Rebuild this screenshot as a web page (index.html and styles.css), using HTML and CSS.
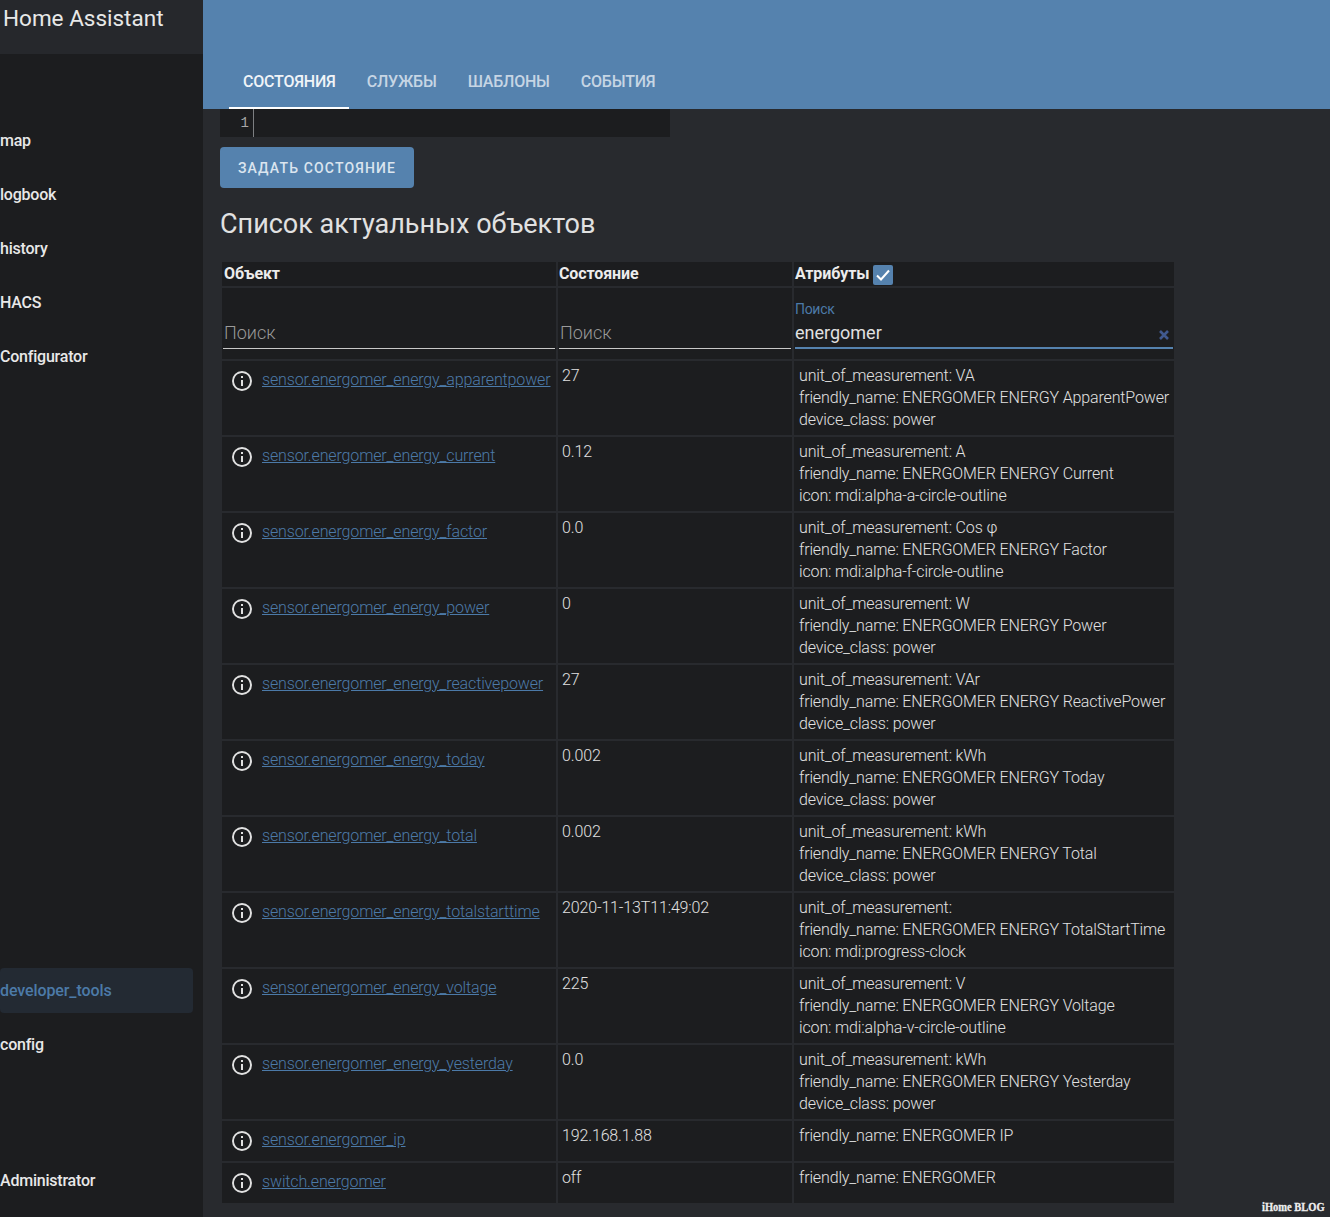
FILE: index.html
```html
<!DOCTYPE html>
<html lang="ru">
<head>
<meta charset="utf-8">
<title>Home Assistant</title>
<link rel="stylesheet" href="styles.css">
</head>
<body>
<svg class="defs" width="0" height="0"><symbol id="info" viewBox="0 0 24 24"><path d="M11,9H13V7H11M12,20C7.59,20 4,16.41 4,12C4,7.59 7.59,4 12,4C16.41,4 20,7.59 20,12C20,16.41 16.41,20 12,20M12,2A10,10 0 0,0 2,12A10,10 0 0,0 12,22A10,10 0 0,0 22,12A10,10 0 0,0 12,2M11,17H13V11H11V17Z"/></symbol></svg>
<aside class="sidebar">
  <div class="brand"><span>Home Assistant</span></div>
  <nav class="nav nav-top">
    <a class="nav-item">map</a>
    <a class="nav-item">logbook</a>
    <a class="nav-item">history</a>
    <a class="nav-item">HACS</a>
    <a class="nav-item">Configurator</a>
  </nav>
  <nav class="nav nav-bottom">
    <a class="nav-item selected">developer_tools</a>
    <a class="nav-item">config</a>
  </nav>
  <div class="nav nav-user"><a class="nav-item">Administrator</a></div>
</aside>
<main class="main">
  <header class="topbar">
    <div class="tabs">
      <a class="tab active">СОСТОЯНИЯ</a>
      <a class="tab">СЛУЖБЫ</a>
      <a class="tab">ШАБЛОНЫ</a>
      <a class="tab">СОБЫТИЯ</a>
    </div>
  </header>
  <section class="content">
    <div class="editor"><div class="gutter">1</div></div>
    <button class="btn">ЗАДАТЬ СОСТОЯНИЕ</button>
    <h1 class="title">Список актуальных объектов</h1>
    <table class="entities">
      <colgroup><col class="c1"><col class="c2"><col class="c3"></colgroup>
      <thead>
        <tr class="head">
          <th>Объект</th>
          <th>Состояние</th>
          <th><span class="attr-head">Атрибуты <span class="check"><svg viewBox="0 0 20 20" width="20" height="20"><path d="M4 10.5l4 4 8-9" fill="none" stroke="#fff" stroke-width="2"/></svg></span></span></th>
        </tr>
        <tr class="filters">
          <td><div class="field"><span class="ph">Поиск</span></div></td>
          <td><div class="field"><span class="ph">Поиск</span></div></td>
          <td><div class="field focused"><span class="lbl">Поиск</span><span class="val">energomer</span><svg class="clear" viewBox="0 0 12 12" width="12" height="12"><path d="M2 2l8 8M10 2l-8 8" fill="none" stroke="#40598f" stroke-width="2.6"/></svg></div></td>
        </tr>
      </thead>
      <tbody>
        <tr><td><div class="ent"><svg class="ico"><use href="#info"/></svg><a class="link">sensor.energomer_energy_apparentpower</a></div></td><td>27</td><td>unit_of_measurement: VA<br>friendly_name: ENERGOMER ENERGY ApparentPower<br>device_class: power</td></tr>
        <tr><td><div class="ent"><svg class="ico"><use href="#info"/></svg><a class="link">sensor.energomer_energy_current</a></div></td><td>0.12</td><td>unit_of_measurement: A<br>friendly_name: ENERGOMER ENERGY Current<br>icon: mdi:alpha-a-circle-outline</td></tr>
        <tr><td><div class="ent"><svg class="ico"><use href="#info"/></svg><a class="link">sensor.energomer_energy_factor</a></div></td><td>0.0</td><td>unit_of_measurement: Cos φ<br>friendly_name: ENERGOMER ENERGY Factor<br>icon: mdi:alpha-f-circle-outline</td></tr>
        <tr><td><div class="ent"><svg class="ico"><use href="#info"/></svg><a class="link">sensor.energomer_energy_power</a></div></td><td>0</td><td>unit_of_measurement: W<br>friendly_name: ENERGOMER ENERGY Power<br>device_class: power</td></tr>
        <tr><td><div class="ent"><svg class="ico"><use href="#info"/></svg><a class="link">sensor.energomer_energy_reactivepower</a></div></td><td>27</td><td>unit_of_measurement: VAr<br>friendly_name: ENERGOMER ENERGY ReactivePower<br>device_class: power</td></tr>
        <tr><td><div class="ent"><svg class="ico"><use href="#info"/></svg><a class="link">sensor.energomer_energy_today</a></div></td><td>0.002</td><td>unit_of_measurement: kWh<br>friendly_name: ENERGOMER ENERGY Today<br>device_class: power</td></tr>
        <tr><td><div class="ent"><svg class="ico"><use href="#info"/></svg><a class="link">sensor.energomer_energy_total</a></div></td><td>0.002</td><td>unit_of_measurement: kWh<br>friendly_name: ENERGOMER ENERGY Total<br>device_class: power</td></tr>
        <tr><td><div class="ent"><svg class="ico"><use href="#info"/></svg><a class="link">sensor.energomer_energy_totalstarttime</a></div></td><td>2020-11-13T11:49:02</td><td>unit_of_measurement:<br>friendly_name: ENERGOMER ENERGY TotalStartTime<br>icon: mdi:progress-clock</td></tr>
        <tr><td><div class="ent"><svg class="ico"><use href="#info"/></svg><a class="link">sensor.energomer_energy_voltage</a></div></td><td>225</td><td>unit_of_measurement: V<br>friendly_name: ENERGOMER ENERGY Voltage<br>icon: mdi:alpha-v-circle-outline</td></tr>
        <tr><td><div class="ent"><svg class="ico"><use href="#info"/></svg><a class="link">sensor.energomer_energy_yesterday</a></div></td><td>0.0</td><td>unit_of_measurement: kWh<br>friendly_name: ENERGOMER ENERGY Yesterday<br>device_class: power</td></tr>
        <tr><td><div class="ent"><svg class="ico"><use href="#info"/></svg><a class="link">sensor.energomer_ip</a></div></td><td>192.168.1.88</td><td>friendly_name: ENERGOMER IP</td></tr>
        <tr><td><div class="ent"><svg class="ico"><use href="#info"/></svg><a class="link">switch.energomer</a></div></td><td>off</td><td>friendly_name: ENERGOMER</td></tr>
      </tbody>
    </table>
  </section>
</main>
<div class="watermark">iHome BLOG</div>
</body>
</html>
```
FILE: styles.css
```css
* { box-sizing: border-box; }
html, body { margin: 0; height: 100%; }
body {
  display: flex;
  width: 1330px;
  height: 1217px;
  overflow: hidden;
  background: #282a2e;
  color: #e1e1e1;
  font-family: Roboto, "Noto Sans", sans-serif;
  position: relative;
}
.defs { position: absolute; }

.sidebar {
  width: 203px;
  flex: none;
  background: #1c1d1f;
  display: flex;
  flex-direction: column;
}
.brand {
  height: 54px;
  background: #26282c;
  padding-left: 3px;
  font-size: 22.5px;
  line-height: 36px;
  color: #e8e8e8;
}
.nav { display: flex; flex-direction: column; gap: 9px; padding-right: 10px; }
.nav-top { margin-top: 64px; }
.nav-bottom { margin-top: 589px; }
.nav-user { margin-top: 91px; }
.nav-item {
  height: 45px;
  line-height: 45px;
  font-size: 16px;
  font-weight: 500;
  letter-spacing: -0.22px;
  color: #e8e8e8;
  border-radius: 4px;
}
.nav-item.selected { background: #232a33; color: #4c7aa8; letter-spacing: -0.1px; }

.main { flex: 1; min-width: 0; }
.topbar {
  height: 109px;
  background: #5582ae;
  padding: 54px 0 0 26px;
}
.tabs { display: flex; height: 55px; }
.tab {
  padding: 0 13px 0 14px;
  margin-right: 4px;
  line-height: 56px;
  font-size: 16px;
  font-weight: 500;
  letter-spacing: -0.2px;
  color: #c6d5e4;
  border-bottom: 2px solid transparent;
}
.tab.active { color: #f0f4f8; border-bottom-color: #fff; }

.content { padding-left: 17px; }
.editor { width: 450px; height: 28px; background: #1c1d1f; }
.gutter {
  width: 34px;
  height: 28px;
  border-right: 1px solid #7d7f82;
  padding-right: 4px;
  text-align: right;
  font-family: "Liberation Mono", monospace;
  font-size: 14px;
  line-height: 29px;
  color: #a8a8a8;
}
.btn {
  display: block;
  margin-top: 10px;
  width: 194px;
  height: 41px;
  border: 0;
  border-radius: 4px;
  background: #5582ae;
  color: #dbe5ef;
  font-family: Roboto, sans-serif;
  font-size: 14px;
  font-weight: 500;
  letter-spacing: 1.15px;
  padding: 0;
}
.title {
  margin: 17px 0 17px;
  font-size: 27px;
  line-height: 38px;
  font-weight: 400;
  color: #e1e1e1;
}

.entities {
  border-collapse: separate;
  border-spacing: 2px;
  table-layout: fixed;
  width: 954px;
  font-size: 16px;
  line-height: 22px;
  font-weight: 300;
  letter-spacing: -0.14px;
}
.c1 { width: 334px; }
.c2 { width: 234px; }
.c3 { width: 380px; }
.entities th, .entities td { background: #1c1d1f; padding: 0; vertical-align: top; }
.entities .head th {
  height: 24px;
  padding: 1px 1px 0;
  text-align: left;
  font-size: 16px;
  font-weight: 700;
  letter-spacing: -0.1px;
  color: #ececec;
}
.entities .head th:first-child { padding-left: 2px; }
.attr-head { display: flex; align-items: center; gap: 4px; height: 22px; }
.check {
  width: 20px;
  height: 20px;
  margin-top: 2px;
  background: #5582ae;
  border-radius: 2px;
  display: block;
}
.check svg { display: block; }
.entities .filters td { height: 71px; padding: 0 1px; }
.field {
  height: 61px;
  border-bottom: 1px solid #c8c8c8;
  padding-left: 1px;
  display: flex;
  flex-direction: column;
  justify-content: flex-end;
  position: relative;
  font-size: 18px;
  line-height: 26px;
  font-weight: 300;
}
.ph { color: #9a9a9a; padding-bottom: 2px; letter-spacing: 0; }
.lbl { font-size: 14px; line-height: 16px; color: #4c7aa8; margin-bottom: 3px; font-weight: 400; letter-spacing: -0.3px; }
.val { font-size: 18px; font-weight: 400; color: #e1e1e1; padding-bottom: 1px; letter-spacing: 0; }
.field.focused { border-bottom: 2px solid #5582ae; padding-left: 0; }
.clear {
  position: absolute;
  right: 3px;
  bottom: 6px;
}
.entities tbody td { padding: 4px; }
.entities tbody td:first-child { padding: 0; }
.entities tbody td:last-child { padding-left: 5px; }
.ent { display: flex; align-items: center; height: 40px; }
.ico { width: 24px; height: 24px; margin: 0 8px; fill: #e1e1e1; flex: none; }
.link { color: #4c7aa8; text-decoration: underline; white-space: nowrap; margin-top: -2px; }

.watermark {
  position: absolute;
  right: 5px;
  bottom: 3px;
  font-family: "Liberation Serif", serif;
  font-size: 12px;
  font-weight: 700;
  line-height: 14px;
  color: #eee;
  transform: scaleX(0.875);
  transform-origin: right center;
  -webkit-text-stroke: 0.3px #eee;
}
```
